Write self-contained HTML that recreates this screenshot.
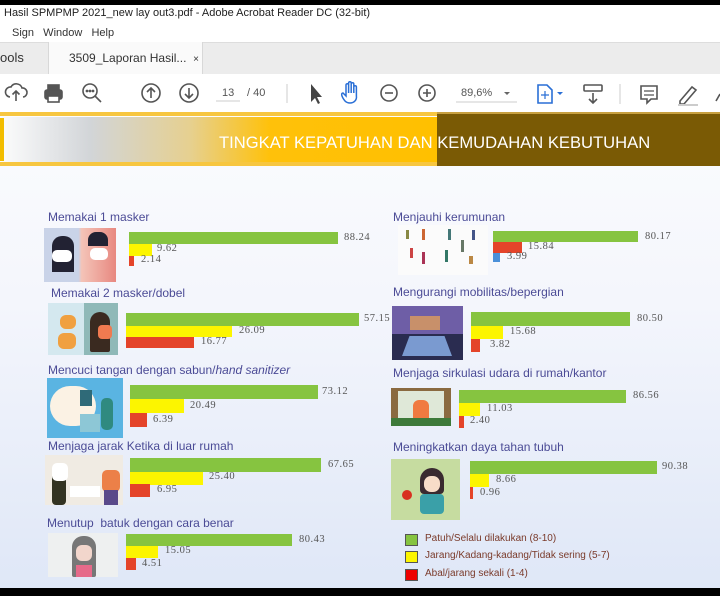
<!DOCTYPE html>
<html><head><meta charset="utf-8"><style>
*{margin:0;padding:0;box-sizing:border-box}
body{width:720px;height:596px;overflow:hidden;background:#000;font-family:"Liberation Sans",sans-serif;position:relative}
.a{position:absolute}
.t{position:absolute;white-space:nowrap}
.lbl{position:absolute;white-space:nowrap;color:#4b4b96;font-size:12px}
.v{position:absolute;white-space:nowrap;color:#555;font-size:10.5px;font-family:"Liberation Serif",serif;letter-spacing:.5px}
.g{position:absolute;background:#86c440}
.y{position:absolute;background:#fcf500}
.r{position:absolute;background:#e4442a}
</style></head><body>
<div class="a" style="left:0;top:5px;width:720px;height:20px;background:#fff"></div>
<div class="t" style="left:4px;top:7px;font-size:11px;color:#222">Hasil SPMPMP 2021_new lay out3.pdf - Adobe Acrobat Reader DC (32-bit)</div>
<div class="a" style="left:0;top:25px;width:720px;height:17px;background:#fff"></div>
<div class="t" style="left:12px;top:27px;font-size:11px;color:#333">Sign&nbsp;&nbsp; Window&nbsp;&nbsp; Help</div>
<div class="a" style="left:0;top:42px;width:720px;height:32px;background:#ececec;border-top:1px solid #ddd"></div>
<div class="a" style="left:48px;top:42px;width:155px;height:32px;background:#fafafa;border-left:1px solid #d8d8d8;border-right:1px solid #d8d8d8"></div>
<div class="t" style="left:0;top:50px;font-size:13px;color:#333">ools</div>
<div class="t" style="left:69px;top:51px;font-size:12px;color:#333">3509_Laporan Hasil...&nbsp; <span style="font-size:10px">×</span></div>
<div class="a" style="left:0;top:74px;width:720px;height:38px;background:#fff"></div>
<svg class="a" style="left:0;top:74px" width="720" height="38" fill="none" stroke="#555" stroke-width="1.6">
<path d="M10 23 a5 5 0 0 1 1-10 a6 6 0 0 1 11 1 a4.5 4.5 0 0 1 1 9 M16 27 V17 M12.5 20.5 L16 17 L19.5 20.5"/>
<rect x="45" y="16" width="17" height="9" rx="2" fill="#555"/><rect x="48" y="11" width="11" height="5" fill="#555"/><rect x="48" y="22" width="11" height="6" fill="#fff"/>
<circle cx="90" cy="17" r="7"/><path d="M95 22 L101 28"/><circle cx="87" cy="17" r=".6" fill="#555"/><circle cx="90" cy="17" r=".6" fill="#555"/><circle cx="93" cy="17" r=".6" fill="#555"/>
<circle cx="151" cy="19" r="9"/><path d="M151 24 V14 M147 18 L151 14 L155 18"/>
<circle cx="189" cy="19" r="9"/><path d="M189 14 V24 M185 20 L189 24 L193 20"/>
<path d="M216 27 H240" stroke="#ddd"/>
<path d="M287 10 V29" stroke="#e0e0e0"/>
<path d="M311 10 L311 28 L315 24 L318 30 L320 29 L317 23 L322 23 Z" fill="#444" stroke="none"/>
<path d="M345 27 C341 22 341 19 343 19 L346 22 V11 a1.3 1.3 0 0 1 2.6 0 V19 V9 a1.3 1.3 0 0 1 2.6 0 V19 V10 a1.3 1.3 0 0 1 2.6 0 V19 V13 a1.3 1.3 0 0 1 2.6 0 V22 C357 26 354 29 350 29 C348 29 346 28 345 27Z" stroke="#2a6fd6" stroke-width="1.5"/>
<circle cx="389" cy="19" r="8"/><path d="M385 19 H393"/>
<circle cx="427" cy="19" r="8"/><path d="M423 19 H431 M427 15 V23"/>
<path d="M456 28 H517" stroke="#ddd"/>
<path d="M504 18 L507 21 L510 18 Z" fill="#666" stroke="none"/>
<path d="M538 11 H547 L552 16 V29 H538 Z" stroke="#2a6fd6"/><path d="M545 17 V25 M541 21 H549" stroke="#2a6fd6" stroke-width="1.2"/>
<path d="M557 18 L560 21 L563 18 Z" fill="#2a6fd6" stroke="none"/>
<rect x="584" y="11" width="18" height="6" rx="1"/><path d="M593 19 V29 M589 25 L593 29 L597 25"/>
<path d="M620 10 V30" stroke="#e0e0e0"/>
<path d="M641 12 H657 V25 H651 L647 29 V25 H641 Z"/><path d="M644 17 H654 M644 21 H654" stroke-width="1.2"/>
<path d="M680 27 L692 13 L696 16 L684 30 L680 30 Z"/><path d="M678 31 H698" stroke="#ccc" stroke-width="2"/>
<path d="M716 27 L720 20"/>
</svg>
<div class="t" style="left:222px;top:87px;font-size:11px;color:#555">13</div>
<div class="t" style="left:247px;top:87px;font-size:11px;color:#555">/ 40</div>
<div class="t" style="left:461px;top:87px;font-size:11px;color:#555">89,6%</div>
<div class="a" style="left:0;top:112px;width:720px;height:476px;background:linear-gradient(#fbfcfe 0%,#f4f6fc 40%,#dfe7f7 100%)"></div>
<div class="a" style="left:0;top:112px;width:437px;height:4px;background:#f7c640"></div>
<div class="a" style="left:0;top:162px;width:437px;height:4px;background:#f7c640"></div>
<div class="a" style="left:0;top:117px;width:437px;height:45px;background:linear-gradient(90deg,#fcfcfc 0px,#f3f4f5 20px,#d2d5d8 90px,#e6d090 190px,#ffc10a 270px,#ffc000 437px)"></div>
<div class="a" style="left:0;top:118px;width:4px;height:43px;background:#f2bd00"></div>
<div class="a" style="left:437px;top:114px;width:283px;height:52px;background:#7a5a05"></div>
<div class="a" style="left:437px;top:112px;width:283px;height:2px;background:#c8a040"></div>
<div class="t" style="left:219px;top:133px;font-size:16.6px;color:#fff">TINGKAT KEPATUHAN DAN KEMUDAHAN KEBUTUHAN</div>

<div class="lbl" style="left:48px;top:210px">Memakai 1 masker</div>
<div class="a" style="left:44px;top:228px;width:72px;height:54px;background:linear-gradient(90deg,#c9d3e8 0,#c9d3e8 48%,#f4c4b8 52%,#e88880 100%)"></div>
<div class="a" style="left:52px;top:236px;width:22px;height:36px;background:#223;border-radius:10px 10px 0 0"></div>
<div class="a" style="left:88px;top:232px;width:20px;height:14px;background:#223;border-radius:8px 8px 0 0"></div>
<div class="a" style="left:52px;top:250px;width:20px;height:12px;background:#fff;border-radius:5px"></div>
<div class="a" style="left:90px;top:248px;width:18px;height:12px;background:#fff;border-radius:5px"></div>
<div class="g" style="left:129px;top:232px;width:209px;height:12px"></div>
<div class="y" style="left:129px;top:244px;width:23px;height:12px"></div>
<div class="r" style="left:129px;top:256px;width:5px;height:10px"></div>
<div class="v" style="left:344px;top:232px">88.24</div>
<div class="v" style="left:157px;top:243px">9.62</div>
<div class="v" style="left:141px;top:254px">2.14</div>

<div class="lbl" style="left:51px;top:286px">Memakai 2 masker/dobel</div>
<div class="a" style="left:48px;top:303px;width:70px;height:52px;background:#d4e8ef"></div>
<div class="a" style="left:84px;top:303px;width:34px;height:52px;background:#8fb9b8"></div>
<div class="a" style="left:90px;top:312px;width:20px;height:40px;background:#3a2a20;border-radius:10px 10px 2px 2px"></div>
<div class="a" style="left:98px;top:325px;width:14px;height:14px;background:#f07a50;border-radius:4px"></div>
<div class="a" style="left:60px;top:315px;width:16px;height:14px;background:#f0a040;border-radius:6px"></div>
<div class="a" style="left:58px;top:333px;width:18px;height:16px;background:#f0a040;border-radius:6px"></div>
<div class="g" style="left:126px;top:313px;width:233px;height:13px"></div>
<div class="y" style="left:126px;top:326px;width:106px;height:11px"></div>
<div class="r" style="left:126px;top:337px;width:68px;height:11px"></div>
<div class="v" style="left:364px;top:313px">57.15</div>
<div class="v" style="left:239px;top:325px">26.09</div>
<div class="v" style="left:201px;top:336px">16.77</div>

<div class="lbl" style="left:48px;top:363px">Mencuci tangan dengan sabun/<i>hand sanitizer</i></div>
<div class="a" style="left:47px;top:378px;width:76px;height:60px;background:#5ab4e2"></div>
<div class="a" style="left:50px;top:386px;width:46px;height:40px;background:#fbf2e4;border-radius:22px"></div>
<div class="a" style="left:80px;top:390px;width:12px;height:16px;background:#2f6a78"></div>
<div class="a" style="left:80px;top:414px;width:20px;height:18px;background:#8dc7d6"></div>
<div class="a" style="left:101px;top:398px;width:12px;height:32px;background:#2f8a80;border-radius:5px"></div>
<div class="g" style="left:130px;top:385px;width:188px;height:14px"></div>
<div class="y" style="left:130px;top:399px;width:54px;height:14px"></div>
<div class="r" style="left:130px;top:413px;width:17px;height:14px"></div>
<div class="v" style="left:322px;top:386px">73.12</div>
<div class="v" style="left:190px;top:400px">20.49</div>
<div class="v" style="left:153px;top:414px">6.39</div>

<div class="lbl" style="left:48px;top:439px">Menjaga jarak Ketika di luar rumah</div>
<div class="a" style="left:45px;top:455px;width:78px;height:50px;background:#f0ebe3"></div>
<div class="a" style="left:52px;top:470px;width:14px;height:35px;background:#332;border-radius:4px"></div>
<div class="a" style="left:52px;top:463px;width:16px;height:18px;background:#fff;border-radius:5px"></div>
<div class="a" style="left:102px;top:470px;width:18px;height:22px;background:#ec8048;border-radius:5px"></div>
<div class="a" style="left:104px;top:490px;width:14px;height:15px;background:#5a4a8a"></div>
<div class="a" style="left:70px;top:486px;width:30px;height:11px;background:#fff"></div>
<div class="g" style="left:130px;top:458px;width:191px;height:14px"></div>
<div class="y" style="left:130px;top:472px;width:73px;height:13px"></div>
<div class="r" style="left:130px;top:484px;width:20px;height:13px"></div>
<div class="v" style="left:328px;top:459px">67.65</div>
<div class="v" style="left:209px;top:471px">25.40</div>
<div class="v" style="left:157px;top:484px">6.95</div>

<div class="lbl" style="left:47px;top:516px">Menutup&nbsp; batuk dengan cara benar</div>
<div class="a" style="left:48px;top:533px;width:70px;height:44px;background:#eef0f0"></div>
<div class="a" style="left:72px;top:536px;width:24px;height:41px;background:#777;border-radius:11px 11px 2px 2px"></div>
<div class="a" style="left:76px;top:545px;width:16px;height:16px;background:#f2d6cc;border-radius:6px"></div>
<div class="a" style="left:76px;top:565px;width:16px;height:12px;background:#e66a8a"></div>
<div class="g" style="left:126px;top:534px;width:166px;height:12px"></div>
<div class="y" style="left:126px;top:546px;width:32px;height:12px"></div>
<div class="r" style="left:126px;top:558px;width:10px;height:12px"></div>
<div class="v" style="left:299px;top:534px">80.43</div>
<div class="v" style="left:165px;top:545px">15.05</div>
<div class="v" style="left:142px;top:558px">4.51</div>

<div class="lbl" style="left:393px;top:210px">Menjauhi kerumunan</div>
<div class="a" style="left:398px;top:225px;width:90px;height:50px;background:#fbfbfb"></div>
<div class="a" style="left:406px;top:230px;width:3px;height:9px;background:#884"></div>
<div class="a" style="left:422px;top:229px;width:3px;height:11px;background:#c63"></div>
<div class="a" style="left:448px;top:229px;width:3px;height:11px;background:#477"></div>
<div class="a" style="left:472px;top:230px;width:3px;height:10px;background:#458"></div>
<div class="a" style="left:410px;top:248px;width:3px;height:10px;background:#c44"></div>
<div class="a" style="left:422px;top:252px;width:3px;height:12px;background:#a35"></div>
<div class="a" style="left:445px;top:250px;width:3px;height:12px;background:#376"></div>
<div class="a" style="left:461px;top:240px;width:3px;height:12px;background:#676"></div>
<div class="a" style="left:469px;top:256px;width:4px;height:8px;background:#b84"></div>
<div class="g" style="left:493px;top:231px;width:145px;height:11px"></div>
<div class="r" style="left:493px;top:242px;width:29px;height:11px"></div>
<div class="a" style="left:493px;top:253px;width:7px;height:9px;background:#4a90d9"></div>
<div class="v" style="left:645px;top:231px">80.17</div>
<div class="v" style="left:528px;top:241px">15.84</div>
<div class="v" style="left:507px;top:251px">3.99</div>

<div class="lbl" style="left:393px;top:285px">Mengurangi mobilitas/bepergian</div>
<div class="a" style="left:392px;top:306px;width:71px;height:54px;background:#6e5ea6"></div>
<div class="a" style="left:410px;top:316px;width:30px;height:14px;background:#c8906a"></div>
<div class="a" style="left:392px;top:334px;width:71px;height:26px;background:#2a2c50"></div>
<div class="a" style="left:402px;top:336px;width:50px;height:20px;background:#7a9ad0;clip-path:polygon(15% 0,85% 0,100% 100%,0 100%)"></div>
<div class="g" style="left:471px;top:312px;width:159px;height:14px"></div>
<div class="y" style="left:471px;top:326px;width:32px;height:13px"></div>
<div class="r" style="left:471px;top:339px;width:9px;height:13px"></div>
<div class="v" style="left:637px;top:313px">80.50</div>
<div class="v" style="left:510px;top:326px">15.68</div>
<div class="v" style="left:490px;top:339px">3.82</div>

<div class="lbl" style="left:393px;top:366px">Menjaga sirkulasi udara di rumah/kantor</div>
<div class="a" style="left:391px;top:388px;width:60px;height:38px;background:#8a6a40"></div>
<div class="a" style="left:398px;top:391px;width:46px;height:30px;background:#dfe8d8"></div>
<div class="a" style="left:413px;top:400px;width:16px;height:22px;background:#f07a40;border-radius:6px 6px 0 0"></div>
<div class="a" style="left:391px;top:418px;width:60px;height:8px;background:#3e7a3a"></div>
<div class="g" style="left:459px;top:390px;width:167px;height:13px"></div>
<div class="y" style="left:459px;top:403px;width:21px;height:13px"></div>
<div class="r" style="left:459px;top:416px;width:5px;height:12px"></div>
<div class="v" style="left:633px;top:390px">86.56</div>
<div class="v" style="left:487px;top:403px">11.03</div>
<div class="v" style="left:470px;top:415px">2.40</div>

<div class="lbl" style="left:393px;top:440px">Meningkatkan daya tahan tubuh</div>
<div class="a" style="left:391px;top:459px;width:69px;height:61px;background:#c6dca0"></div>
<div class="a" style="left:420px;top:468px;width:24px;height:26px;background:#3a2a30;border-radius:12px 12px 4px 4px"></div>
<div class="a" style="left:424px;top:476px;width:16px;height:16px;background:#f8dcc8;border-radius:7px"></div>
<div class="a" style="left:420px;top:494px;width:24px;height:20px;background:#3aa0a8;border-radius:4px"></div>
<div class="a" style="left:402px;top:490px;width:10px;height:10px;background:#d83020;border-radius:5px"></div>
<div class="g" style="left:470px;top:461px;width:187px;height:13px"></div>
<div class="y" style="left:470px;top:474px;width:19px;height:13px"></div>
<div class="r" style="left:470px;top:487px;width:3px;height:12px"></div>
<div class="v" style="left:662px;top:461px">90.38</div>
<div class="v" style="left:496px;top:474px">8.66</div>
<div class="v" style="left:480px;top:487px">0.96</div>

<div class="a" style="left:405px;top:534px;width:13px;height:12px;background:#86c440;border:1px solid #555"></div>
<div class="a" style="left:405px;top:551px;width:13px;height:12px;background:#fcf500;border:1px solid #555"></div>
<div class="a" style="left:405px;top:569px;width:13px;height:12px;background:#e00;border:1px solid #555"></div>
<div class="t" style="left:425px;top:533px;font-size:10px;color:#7a3a2a">Patuh/Selalu dilakukan (8-10)</div>
<div class="t" style="left:425px;top:550px;font-size:10px;color:#7a3a2a">Jarang/Kadang-kadang/Tidak sering (5-7)</div>
<div class="t" style="left:425px;top:568px;font-size:10px;color:#7a3a2a">Abal/jarang sekali (1-4)</div>
</body></html>
